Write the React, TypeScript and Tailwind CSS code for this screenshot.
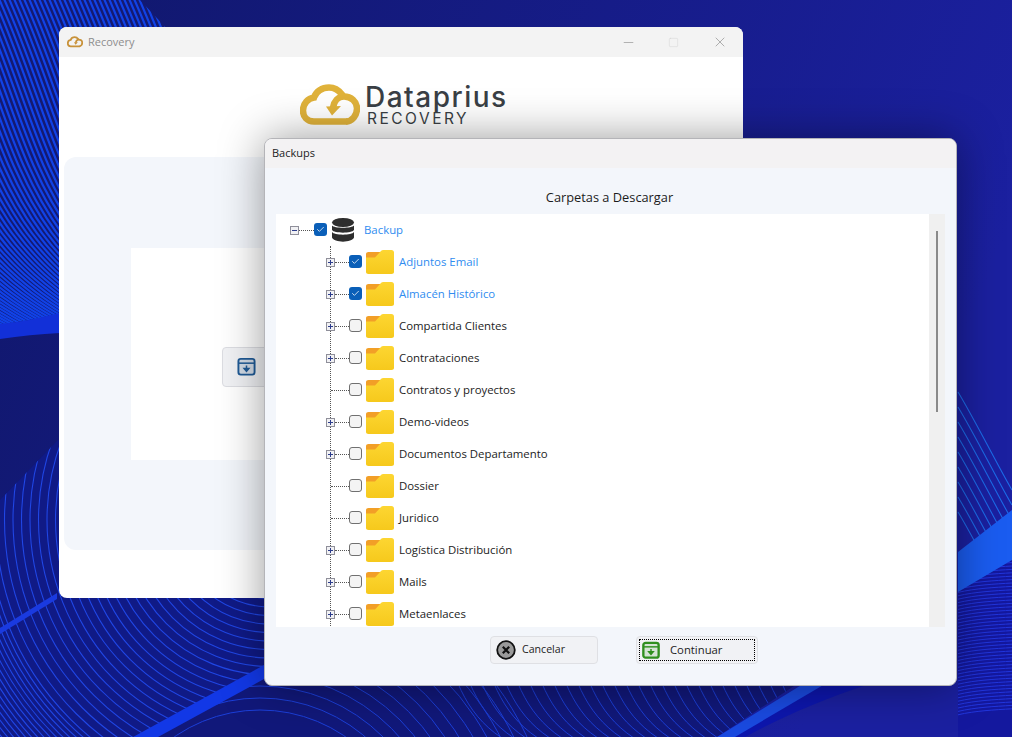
import { Check, Minus, Square, X } from "lucide-react";

const FONT = "font-['Open_Sans','Noto_Sans',sans-serif]";

const folders = [
  { name: "Adjuntos Email", expandable: true, checked: true },
  { name: "Almacén Histórico", expandable: true, checked: true },
  { name: "Compartida Clientes", expandable: true },
  { name: "Contrataciones", expandable: true },
  { name: "Contratos y proyectos" },
  { name: "Demo-videos", expandable: true },
  { name: "Documentos Departamento", expandable: true },
  { name: "Dossier" },
  { name: "Juridico" },
  { name: "Logística Distribución", expandable: true },
  { name: "Mails", expandable: true },
  { name: "Metaenlaces", expandable: true },
];

function CloudLogo({ className, color = "#e0b23a" }: { className?: string; color?: string }) {
  return (
    <svg viewBox="0 0 60 42" className={className} fill="none">
      <path
        d="M46 37H14C7 37 3 32 3 26C3 19 8 14 14 13C16 7 22 3 29 3C35 3 39 6 42 10"
        stroke={color}
        strokeWidth="6.5"
        strokeLinecap="round"
      />
      <path d="M33 23C34 17 38 12 44 12C51 12 57 17 57 24C57 31 52 37 46 37" stroke={color} strokeWidth="6.5" />
      <path d="M26 22L41 21.5L32 31Z" fill={color} />
    </svg>
  );
}

function ArchiveIcon({ color, className, weight = 2 }: { color: string; className?: string; weight?: number }) {
  return (
    <svg viewBox="0 0 20 20" className={className} fill="none">
      <rect x="1.5" y="2" width="17" height="16.5" rx="2.5" stroke={color} strokeWidth={weight} fillOpacity="0.15" fill={color} />
      <path d="M2 6.5H18" stroke={color} strokeWidth="1.6" />
      <path d="M10 9V14M7.5 12L10 15L12.5 12Z" stroke={color} strokeWidth="1.6" fill={color} />
    </svg>
  );
}

function FolderIcon() {
  return (
    <svg viewBox="0 0 28 24" className="h-6 w-7 shrink-0">
      <defs>
        <linearGradient id="folderBody" x1="0" y1="0" x2="0" y2="1">
          <stop offset="0" stopColor="#fdd632" />
          <stop offset="1" stopColor="#f6c91c" />
        </linearGradient>
      </defs>
      <path d="M0 4C0 2.8 1 2 2.5 2H15V10H0Z" fill="#f29f27" />
      <path
        d="M0 7.5H9L14.5 1.5C15 0.9 16 0 17 0H25.5C27 0 28 1 28 2.5V22C28 23.2 27 24 25.5 24H2.5C1 24 0 23.2 0 22Z"
        fill="url(#folderBody)"
      />
    </svg>
  );
}

function DatabaseIcon() {
  return (
    <svg viewBox="0 0 24 24" className="h-6 w-6 shrink-0">
      <ellipse cx="12" cy="4.5" rx="11" ry="4.5" fill="#2d2d2d" />
      <path d="M1 7.5C3 10.5 21 10.5 23 7.5V12C21 15.5 3 15.5 1 12Z" fill="#2d2d2d" />
      <path d="M1 14C3 17.5 21 17.5 23 14V19.5C21 25 3 25 1 19.5Z" fill="#2d2d2d" />
    </svg>
  );
}

function Expander({ open }: { open?: boolean }) {
  return (
    <span className="relative flex h-[9px] w-[9px] shrink-0 items-center justify-center border border-[#8f8f9a] bg-[#f1f1f4]">
      <span className="h-px w-[5px] bg-[#2c3c8c]" />
      {!open && <span className="absolute h-[5px] w-px bg-[#2c3c8c]" />}
    </span>
  );
}

function TreeCheck({ checked }: { checked?: boolean }) {
  return checked ? (
    <span className="mb-px flex h-[13px] w-[13px] shrink-0 items-center justify-center rounded-[3px] bg-[#0a5fb8]">
      <Check size={9} strokeWidth={2} className="text-white" />
    </span>
  ) : (
    <span className="mb-px h-[13px] w-[13px] shrink-0 rounded-[3px] border-[1.5px] border-[#707070] bg-[#f4f4f4]" />
  );
}

function FolderRow({ name, expandable, checked }: { name: string; expandable?: boolean; checked?: boolean }) {
  return (
    <div className="flex h-8 items-center">
      <div className="flex h-8 w-[23px] shrink-0 items-center">
        {expandable ? (
          <>
            <Expander />
            <span className="h-0 w-[14px] border-t border-dotted border-[#555]" />
          </>
        ) : (
          <span className="ml-[5px] h-0 w-[18px] border-t border-dotted border-[#555]" />
        )}
      </div>
      <TreeCheck checked={checked} />
      <span className="ml-[4px] flex items-center">
        <FolderIcon />
      </span>
      <span className={`ml-[5px] text-[11.4px] ${checked ? "text-[#2f8cf0]" : "text-[#1c1c1c]"}`}>{name}</span>
    </div>
  );
}

function Wallpaper() {
  const stripes = Array.from({ length: 100 }, (_, i) => {
    const s = i * 5 - 340;
    return `M${s} -10C${s + 70} 140 ${s + 60} 260 ${s + 260} 345`;
  });
  const arcs = Array.from({ length: 50 }, (_, i) => (i < 25 ? 70 + i * 8.5 : 282 + (i - 25) * 4.5));
  const humps = Array.from({ length: 13 }, (_, i) => 150 + i * 12);
  const steep = Array.from({ length: 30 }, (_, i) => {
    const s = 455 + i * 12;
    return `M${s} 676C${s + 15} 716 ${s + 40} 745 ${s + 100} 760`;
  });
  const rightWaves = Array.from({ length: 9 }, (_, i) => {
    const o = i * 15;
    return `M958 ${392 + o}C975 ${420 + o} 1000 ${470 + o} 1012 ${490 + o}`;
  });
  const rightFlat = Array.from({ length: 48 }, (_, i) => {
    const y = 555 + i * 3.4;
    return `M958 ${y}C975 ${y - 4} 995 ${y - 5} 1012 ${y - 6}`;
  });

  return (
    <svg viewBox="0 0 1012 737" className="absolute inset-0 h-full w-full" fill="none">
      <defs>
        <linearGradient id="wall" x1="0" y1="0" x2="1" y2="0.3">
          <stop offset="0" stopColor="#10176a" />
          <stop offset="1" stopColor="#1b20a0" />
        </linearGradient>
        <clipPath id="topLeft">
          <path d="M0 0H140L170 32V325L60 315L0 325Z" />
        </clipPath>
        <clipPath id="lowerLeft">
          <path d="M0 500L58 440H264V667L133 737H0Z" />
        </clipPath>
        <clipPath id="lowerMid">
          <path d="M150 737L264 675L803 680L717 737Z" />
        </clipPath>
        <clipPath id="rightLower">
          <path d="M958 590L1012 560V737H958Z" />
        </clipPath>
      </defs>
      <rect width="1012" height="737" fill="url(#wall)" />

      <path d="M0 0H140L170 32V325L60 315L0 325Z" fill="#141a72" />
      <g stroke="#1142e6" strokeWidth="2.2" clipPath="url(#topLeft)">
        {stripes.map((d) => (
          <path key={d} d={d} />
        ))}
      </g>
      <path d="M0 324C20 322 40 318 60 313V333C40 334 20 336 0 339Z" fill="#1230d8" />

      <path d="M0 500L58 440H264V667L133 737H0Z" fill="#101a86" />
      <g stroke="#2046e4" strokeWidth="1.1" clipPath="url(#lowerLeft)">
        {arcs.map((r) => (
          <circle key={r} cx="270" cy="520" r={r} />
        ))}
      </g>
      <path d="M0 628L57 593V599L0 634Z" fill="#1a3ae0" />

      <path d="M150 737L264 675L803 680L717 737Z" fill="#11187a" />
      <g stroke="#1c3fd8" strokeWidth="1" clipPath="url(#lowerMid)">
        {humps.map((r) => (
          <circle key={r} cx="260" cy="860" r={r} />
        ))}
        {steep.map((d) => (
          <path key={d} d={d} />
        ))}
      </g>
      <path d="M133 737L264 665V679L158 737Z" fill="#1238e6" />
      <path d="M717 737L803 684H870C820 700 780 718 745 737Z" fill="#0d16ad" />
      <path d="M717 737L803 684H825L735 737Z" fill="#1a4ae0" />

      <g stroke="#1c6be8" strokeWidth="1.1">
        {rightWaves.map((d) => (
          <path key={d} d={d} />
        ))}
      </g>
      <rect x="958" y="556" width="54" height="181" fill="#14189e" clipPath="url(#rightLower)" />
      <g stroke="#2236dc" strokeWidth="1" clipPath="url(#rightLower)">
        {rightFlat.map((d) => (
          <path key={d} d={d} />
        ))}
      </g>
      <path d="M958 552L1012 510V560L958 592Z" fill="#1a5cf0" />
    </svg>
  );
}

function RecoveryWindow() {
  return (
    <div className="absolute left-[59px] top-[27px] flex h-[571px] w-[684px] flex-col overflow-hidden rounded-lg bg-white">
      <div className="flex h-[30px] shrink-0 items-center bg-[#f3f3f3] pl-2">
        <CloudLogo className="h-3 w-4" color="#c8923a" />
        <span className="ml-[5px] text-[11px] text-[#8d8d8d]">Recovery</span>
        <div className="ml-auto flex items-center pr-[15px] text-[#8a8a8a]">
          <Minus size={15} strokeWidth={1} />
          <Square size={11} strokeWidth={1} className="ml-[32px] text-[#d0d0d0]" />
          <X size={16} strokeWidth={1} className="ml-[33px]" />
        </div>
      </div>
      <div className="flex h-[100px] shrink-0 items-start justify-center pt-[27px] pl-[5px]">
        <CloudLogo className="h-[43px] w-[60px]" />
        <div className="ml-[5px] flex w-[142px] flex-col">
          <span className="font-['Inter',sans-serif] text-[28px] leading-[27px] font-medium tracking-[1.5px] whitespace-nowrap text-[#3a3f45]">Dataprius</span>
          <span className="pl-[2px] font-['Inter',sans-serif] text-[15.5px] leading-4 tracking-[2.5px] whitespace-nowrap text-[#3a3f45]">RECOVERY</span>
        </div>
      </div>
      <div className="mx-[5px] flex h-[393px] items-center justify-center rounded-xl bg-[#f3f6fb] px-[67px]">
        <div className="flex h-[212px] w-full items-center bg-white pl-[91px]">
          <div className="mt-[26px] flex h-10 w-[200px] items-center rounded border border-[#dcdde2] bg-[#f1f2f5] pl-[14px]">
            <ArchiveIcon color="#1f5a96" className="h-[19px] w-[19px]" />
          </div>
        </div>
      </div>
    </div>
  );
}

function BackupsDialog() {
  return (
    <div className="absolute left-[264px] top-[138px] flex h-[548px] w-[693px] flex-col overflow-hidden rounded-lg border border-[#b4b4b8] bg-[#f3f6fb] shadow-[0_0_45px_rgba(0,0,0,0.4)]">
      <div className="flex h-[29px] shrink-0 items-center bg-[#f3f2f3] pl-[7px] text-[11px] text-[#1c1c1c]">Backups</div>
      <div className="flex h-[46px] shrink-0 items-center justify-center pt-[13px] pr-[2px] text-[12.8px] text-[#1c1c1c]">Carpetas a Descargar</div>
      <div className="mx-[11px] flex h-[413px] shrink-0">
        <div className="relative flex-1 overflow-hidden bg-white pl-[14px]">
          <div className="flex h-8 items-center">
            <Expander open />
            <span className="h-0 w-[15px] border-t border-dotted border-[#555]" />
            <TreeCheck checked />
            <span className="ml-[4px]">
              <DatabaseIcon />
            </span>
            <span className="ml-[9px] text-[11.4px] text-[#2f8cf0]">Backup</span>
          </div>
          <div className="relative pl-[36px]">
            <span className="absolute top-0 bottom-0 left-[40px] border-l border-dotted border-[#555]" />
            {folders.map((f) => (
              <FolderRow key={f.name} {...f} />
            ))}
          </div>
        </div>
        <div className="w-4 bg-[#f0f0f0] pt-[17px]">
          <div className="ml-[7px] h-[181px] w-[2px] bg-[#8a8a8a]" />
        </div>
      </div>
      <div className="flex flex-1 items-start pt-[9px] pl-[225px]">
        <button className="flex h-7 w-[108px] items-center rounded border border-[#dfe0e4] bg-[#f1f2f5] pl-[5px] text-[10.6px] text-[#1c1c1c]">
          <svg viewBox="0 0 20 20" className="h-5 w-5">
            <circle cx="10" cy="10" r="8.8" fill="#9a9a9a" stroke="#111" strokeWidth="1.8" />
            <path d="M6.8 6.8L13.2 13.2M13.2 6.8L6.8 13.2" stroke="#111" strokeWidth="2.2" />
          </svg>
          <span className="ml-[6px]">Cancelar</span>
        </button>
        <button className="ml-[38px] flex h-7 w-[122px] items-center rounded border border-[#dfe0e4] bg-[#f1f2f5] p-[2px] text-[11.3px] text-[#1c1c1c]">
          <span className="flex h-full w-full items-center border border-dotted border-black pl-[2px]">
            <ArchiveIcon color="#2f8f1e" className="h-[18px] w-[18px]" weight={2.6} />
            <span className="ml-[10px]">Continuar</span>
          </span>
        </button>
      </div>
    </div>
  );
}

export default function App() {
  return (
    <div className={`relative h-[737px] w-[1012px] overflow-hidden ${FONT}`}>
      <Wallpaper />
      <RecoveryWindow />
      <BackupsDialog />
    </div>
  );
}
